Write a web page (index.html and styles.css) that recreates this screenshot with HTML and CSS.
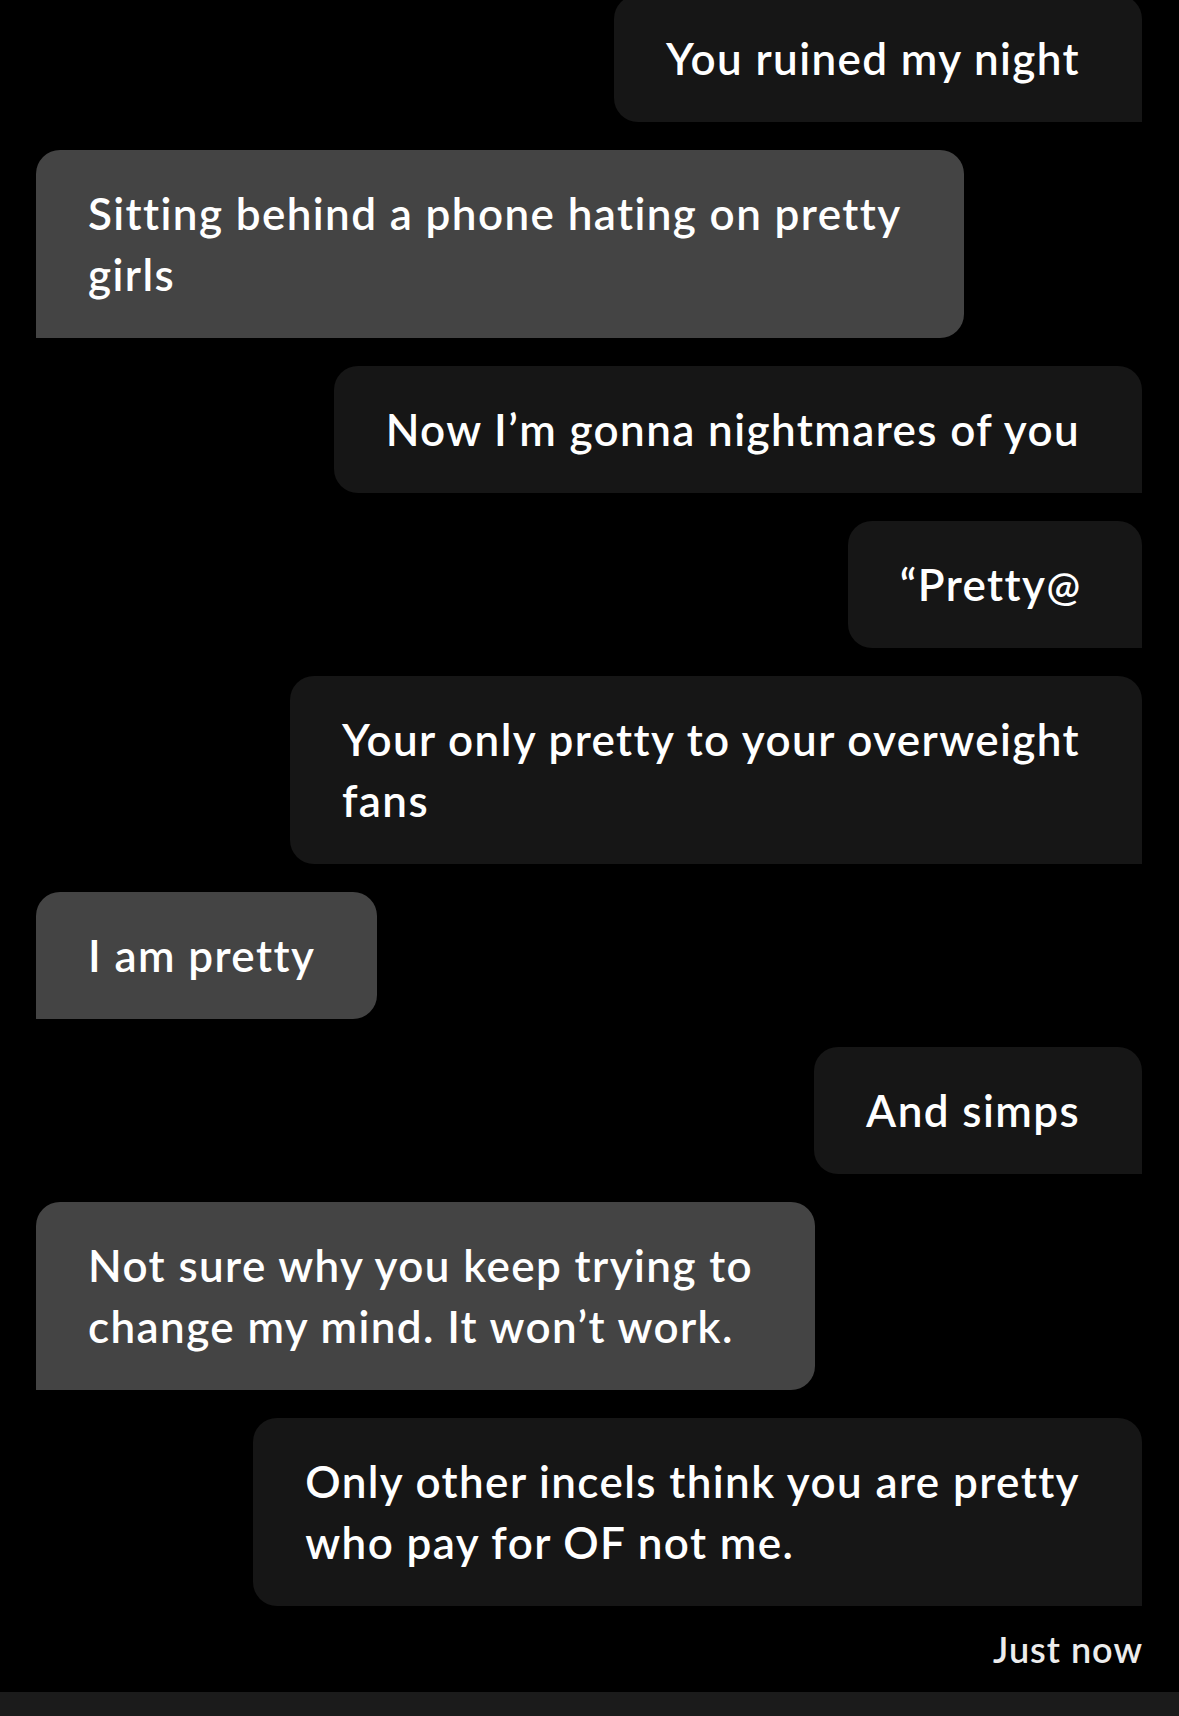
FILE: index.html
```html
<!DOCTYPE html>
<html lang="en">
<head>
<meta charset="utf-8">
<title>Chat</title>
<link rel="stylesheet" href="styles.css">
</head>
<body>
<main class="chat">
  <div class="thread">
    <div class="msg sent">You ruined my night</div>
    <div class="msg recv">Sitting behind a phone hating on pretty<br>girls</div>
    <div class="msg sent">Now I’m gonna nightmares of you</div>
    <div class="msg sent">“Pretty<span class="at">@</span></div>
    <div class="msg sent">Your only pretty to your overweight<br>fans</div>
    <div class="msg recv">I am pretty</div>
    <div class="msg sent">And simps</div>
    <div class="msg recv">Not sure why you keep trying to<br>change my mind. It won’t work.</div>
    <div class="msg sent">Only other incels think you are pretty<br>who pay for OF not me.</div>
  </div>
  <div class="stamp">Just now</div>
</main>
<div class="composer"></div>
</body>
</html>
```

FILE: styles.css
```css
html, body {
  margin: 0;
  padding: 0;
  background: #000;
  height: 1716px;
  overflow: hidden;
}

body {
  display: flex;
  flex-direction: column;
  font-family: "Lato", "Noto Sans", sans-serif;
  color: #fff;
}

.chat {
  flex: 1;
  display: flex;
  flex-direction: column;
  padding: 0 37px 0 36px;
}

.thread {
  margin-top: -5px;
  display: flex;
  flex-direction: column;
  gap: 28px;
}

.msg {
  font-size: 44px;
  font-weight: 600;
  letter-spacing: 1.4px;
  line-height: 61px;
  padding: 33px 62px 33px 52px;
  white-space: nowrap;
}

.at {
  font-size: 40px;
  letter-spacing: 0;
  line-height: 0;
}

.sent {
  align-self: flex-end;
  background: #161616;
  border-radius: 24px 24px 0 24px;
}

.recv {
  align-self: flex-start;
  background: #444444;
  border-radius: 24px 24px 24px 0;
}

.stamp {
  align-self: flex-end;
  margin-top: 23px;
  font-size: 36px;
  font-weight: 600;
  letter-spacing: 1px;
  margin-right: -1px;
  line-height: 40px;
  color: #ececec;
}

.composer {
  height: 24px;
  background: #1b1b1b;
  flex: none;
}
```
